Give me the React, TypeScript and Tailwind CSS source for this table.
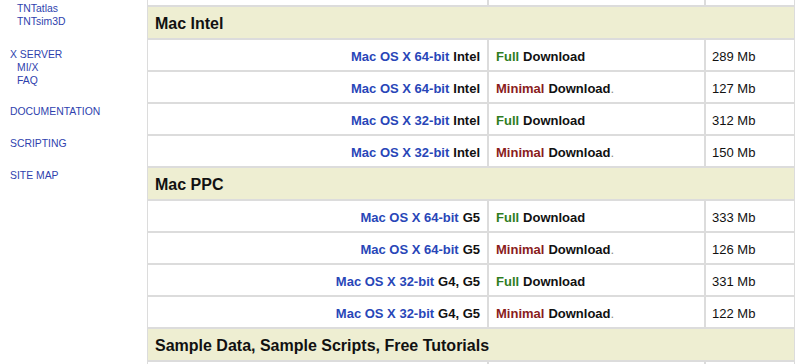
import React from 'react';

type Row = { os: string; arch: string; full: boolean; size: string };

const sections: { title: string; rows: Row[] }[] = [
  {
    title: 'Mac Intel',
    rows: [
      { os: 'Mac OS X 64-bit', arch: 'Intel', full: true, size: '289 Mb' },
      { os: 'Mac OS X 64-bit', arch: 'Intel', full: false, size: '127 Mb' },
      { os: 'Mac OS X 32-bit', arch: 'Intel', full: true, size: '312 Mb' },
      { os: 'Mac OS X 32-bit', arch: 'Intel', full: false, size: '150 Mb' },
    ],
  },
  {
    title: 'Mac PPC',
    rows: [
      { os: 'Mac OS X 64-bit', arch: 'G5', full: true, size: '333 Mb' },
      { os: 'Mac OS X 64-bit', arch: 'G5', full: false, size: '126 Mb' },
      { os: 'Mac OS X 32-bit', arch: 'G4, G5', full: true, size: '331 Mb' },
      { os: 'Mac OS X 32-bit', arch: 'G4, G5', full: false, size: '122 Mb' },
    ],
  },
];

const cell = 'border border-[#dcdcdc] flex items-center';

const SectionHeader: React.FC<{ title: string }> = ({ title }) => (
  <div className={`${cell} shrink-0 w-[648px] h-[33px] bg-[#eeeed2] pl-[7px] pt-[2px] text-[16px] font-bold text-[#111]`}>
    {title}
  </div>
);

const DownloadRow: React.FC<{ row: Row }> = ({ row }) => (
  <div className="flex shrink-0 h-[32px]">
    <div className={`${cell} w-[341px] justify-end pr-[7px] pt-[3px] font-bold`}>
      <a className="text-[#2846b8]">{row.os}</a>
      <span className="ml-[4px] text-[#111]">{row.arch}</span>
    </div>
    <div className={`${cell} w-[217px] pl-[7px] pt-[3px] font-bold`}>
      {row.full ? (
        <span className="text-[#2f7d1f]">Full</span>
      ) : (
        <span className="text-[#8a1c1c]">Minimal</span>
      )}
      <span className="ml-[4px] text-[#111]">Download</span>
      {!row.full && <span className="text-[#8a8a8a] font-normal">.</span>}
    </div>
    <div className={`${cell} w-[90px] pl-[6px] pt-[3px] text-[#111]`}>{row.size}</div>
  </div>
);

const SideLink: React.FC<{ label: string; indent?: boolean }> = ({ label, indent }) => (
  <a className={`block h-[13px] leading-[13px] text-[#2f3fae] ${indent ? 'pl-[7px]' : ''}`}>{label}</a>
);

export default function App() {
  return (
    <div className="flex w-[808px] h-[364px] overflow-hidden bg-white font-['Liberation_Sans',Arial,sans-serif]">
      {/* Left navigation */}
      <div className="w-[147px] shrink-0 pl-[10px] text-[10.4px] pt-[2px]">
        <SideLink label="TNTatlas" indent />
        <SideLink label="TNTsim3D" indent />
        <div className="mt-[20px]">
          <SideLink label="X SERVER" />
          <SideLink label="MI/X" indent />
          <SideLink label="FAQ" indent />
        </div>
        <div className="mt-[18px]">
          <SideLink label="DOCUMENTATION" />
        </div>
        <div className="mt-[19px]">
          <SideLink label="SCRIPTING" />
        </div>
        <div className="mt-[19px]">
          <SideLink label="SITE MAP" />
        </div>
      </div>

      {/* Download table */}
      <div className="flex flex-col text-[13px]">
        <div className="flex shrink-0 h-[6px]">
          <div className="w-[341px] border-x border-b border-[#dcdcdc]" />
          <div className="w-[217px] border-x border-b border-[#dcdcdc]" />
          <div className="w-[90px] border-x border-b border-[#dcdcdc]" />
        </div>
        {sections.map((s) => (
          <React.Fragment key={s.title}>
            <SectionHeader title={s.title} />
            {s.rows.map((r, i) => (
              <DownloadRow key={i} row={r} />
            ))}
          </React.Fragment>
        ))}
        <SectionHeader title="Sample Data, Sample Scripts, Free Tutorials" />
        <div className="flex shrink-0 h-[32px]">
          <div className={`${cell} w-[341px]`} />
          <div className={`${cell} w-[217px]`} />
          <div className={`${cell} w-[90px]`} />
        </div>
      </div>
    </div>
  );
}
